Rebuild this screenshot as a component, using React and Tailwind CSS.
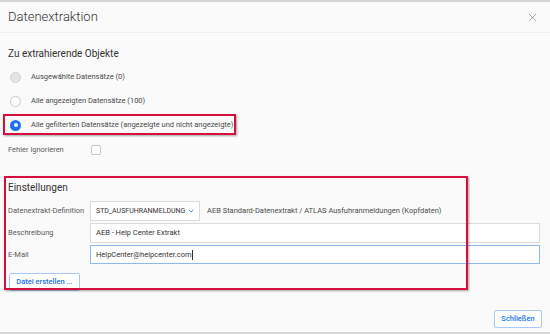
import { ChevronDown, X } from "lucide-react";

function Radio({ state, label }) {
  let circle = "w-[11px] h-[11px] rounded-full border border-[#c8c8c8] bg-white";
  if (state === "disabled") circle = "w-[11px] h-[11px] rounded-full border border-[#d0d0d0] bg-[#e4e4e4]";
  return (
    <div className="flex items-center h-[24px]">
      <div className="w-[23px] flex items-center pl-[2px]">
        {state === "checked" ? (
          <div className="w-[11px] h-[11px] rounded-full bg-[#1a73e8] flex items-center justify-center">
            <div className="w-[4px] h-[4px] rounded-full bg-white" />
          </div>
        ) : (
          <div className={circle} />
        )}
      </div>
      <span className="text-[7.5px] text-[#4a4a4a]">{label}</span>
    </div>
  );
}

function Field({ label, children, className = "" }) {
  return (
    <div className={"flex items-center " + className}>
      <div className="w-[82px] shrink-0 text-[7.5px] text-[#5a5a5a]">{label}</div>
      {children}
    </div>
  );
}

export default function App() {
  return (
    <div
      className="relative w-[550px] h-[334px] bg-[#fafafa] border-t-2 border-b-2 border-[#d6d6d6] overflow-hidden"
      style={{ fontFamily: "Roboto, 'Liberation Sans', sans-serif" }}
    >
      <div className="h-[31px] flex items-center justify-between pl-2 pr-[11px] border-b border-[#efefef]">
        <span className="text-[13px] font-light text-[#333]">Datenextraktion</span>
        <X size={13} strokeWidth={1.2} className="text-[#777]" />
      </div>

      <div className="px-2">
        <div className="mt-[10px] h-[20px] flex items-center text-[10px] text-[#333]">
          Zu extrahierende Objekte
        </div>
        <div className="mt-[2px]">
          <Radio state="disabled" label="Ausgewählte Datensätze (0)" />
          <Radio label="Alle angezeigten Datensätze (100)" />
          <Radio state="checked" label="Alle gefilterten Datensätze (angezeigte und nicht angezeigte)" />
        </div>
        <div className="mt-[1px] h-[24px] flex items-center">
          <span className="w-[83px] text-[7.5px] text-[#5a5a5a]">Fehler ignorieren</span>
          <div className="w-[10px] h-[10px] rounded-[2px] border border-[#c8c8c8] bg-white" />
        </div>

        <div className="mt-[15px] h-[20px] flex items-center text-[10px] text-[#333]">Einstellungen</div>

        <Field label="Datenextrakt-Definition" className="mt-[4px] h-[20px]">
          <div className="w-[110px] shrink-0 h-[20px] flex items-center justify-between pl-[5px] pr-[4px] border border-[#dcdcdc] bg-white text-[7px] text-[#333]">
            <span className="whitespace-nowrap">STD_AUSFUHRANMELDUNG</span>
            <ChevronDown size={8} strokeWidth={2.5} className="text-[#1a73e8] shrink-0" />
          </div>
          <span className="ml-[7px] text-[7.5px] text-[#4a4a4a] whitespace-nowrap">
            AEB Standard-Datenextrakt / ATLAS Ausfuhranmeldungen (Kopfdaten)
          </span>
        </Field>
        <Field label="Beschreibung" className="mt-[2px] h-[20px]">
          <div className="w-[450px] h-[20px] flex items-center px-[5px] border border-[#dcdcdc] bg-white text-[7.5px] text-[#333]">
            AEB - Help Center Extrakt
          </div>
        </Field>
        <Field label="E-Mail" className="mt-[2px] h-[19px]">
          <div className="w-[450px] h-[19px] flex items-center px-[5px] border border-[#8fb8ee] bg-white text-[7.5px] text-[#333]">
            HelpCenter@helpcenter.com
            <span className="inline-block w-px h-[10px] bg-[#333]" />
          </div>
        </Field>
        <div className="mt-[3px] pl-[1px]">
          <button className="w-[71px] h-[18px] rounded-[2px] border border-[#a9c9f2] bg-white text-[7.5px] font-medium text-[#1a73e8]">
            Datei erstellen ...
          </button>
        </div>
      </div>

      <div className="absolute right-[8px] bottom-[4px]">
        <button className="w-[48px] h-[18px] rounded-[2px] border border-[#a9c9f2] bg-white text-[7.5px] font-medium text-[#1a73e8]">
          Schließen
        </button>
      </div>

      {/* annotation frames */}
      <div className="absolute left-[3px] top-[112px] w-[233px] h-[21px] border-2 border-[#d4103c] shadow-[1px_1px_2px_rgba(0,0,0,0.35)]" />
      <div className="absolute left-[4px] top-[174px] w-[464px] h-[114px] border-2 border-[#d4103c] shadow-[1px_1px_2px_rgba(0,0,0,0.35)]" />
    </div>
  );
}
